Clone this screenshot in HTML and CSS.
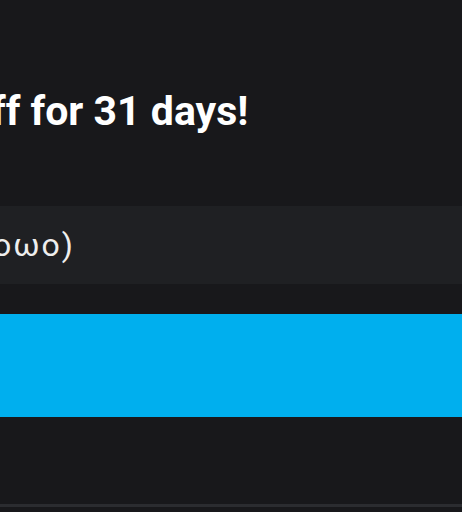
FILE: index.html
```html
<!DOCTYPE html>
<html>
<head>
<meta charset="utf-8">
<link rel="stylesheet" href="styles.css">
</head>
<body>
<main class="panel">
  <h1 class="title">ff for 31 days!</h1>
  <div class="field"><span class="field-text">(oωo)</span></div>
  <div class="action"></div>
  <div class="footer-line"></div>
</main>
</body>
</html>
```
FILE: styles.css
```css
html, body {
  margin: 0;
  padding: 0;
  background: #18181b;
  overflow: hidden;
}
.panel {
  width: 462px;
  height: 512px;
  display: flex;
  flex-direction: column;
  font-family: Roboto, "Noto Sans", sans-serif;
}
.title {
  margin: 87px 0 0 -9px;
  font-size: 41px;
  line-height: 48px;
  font-weight: 700;
  color: #ffffff;
  white-space: nowrap;
}
.field {
  margin-top: 71px;
  height: 78px;
  background: #1f2023;
  display: flex;
  align-items: center;
}
.field-text {
  margin-left: -20px;
  font-size: 32px;
  letter-spacing: 2px;
  color: #eeeeee;
  white-space: nowrap;
}
.action {
  margin-top: 30px;
  height: 103px;
  background: #00afee;
}
.footer-line {
  margin-top: 87px;
  height: 3px;
  background: #2b2c30;
}
```
